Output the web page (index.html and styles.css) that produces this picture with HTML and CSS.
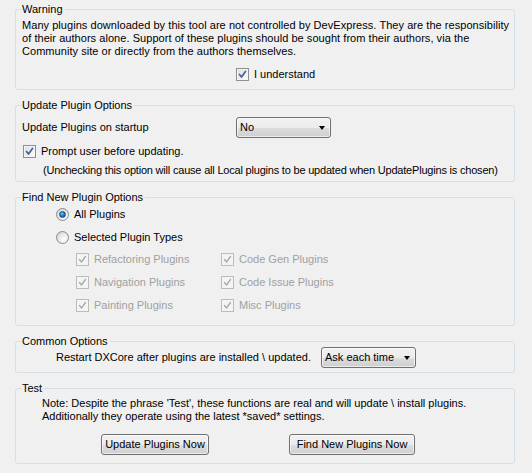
FILE: index.html
```html
<!DOCTYPE html>
<html>
<head>
<meta charset="utf-8">
<link rel="stylesheet" href="styles.css">
</head>
<body>
<div class="page">
  <fieldset class="group g-warning">
    <legend>Warning</legend>
    <p class="para warn-text">Many plugins downloaded by this tool are not controlled by DevExpress. They are the responsibility<br>of their authors alone. Support of these plugins should be sought from their authors, via the<br>Community site or directly from the authors themselves.</p>
    <div class="row understand">
      <span class="cb"><svg viewBox="0 0 11 11" width="11" height="11"><path d="M2.5 5.5 L4.5 8 L8.5 2.5" /></svg></span>
      <span class="lbl">I understand</span>
    </div>
  </fieldset>

  <fieldset class="group g-update">
    <legend>Update Plugin Options</legend>
    <div class="row startup">
      <span class="startup-label">Update Plugins on startup</span>
      <div class="combo combo-no"><span class="combo-text">No</span><span class="arrow"></span></div>
    </div>
    <div class="row prompt">
      <span class="cb"><svg viewBox="0 0 11 11" width="11" height="11"><path d="M2.5 5.5 L4.5 8 L8.5 2.5" /></svg></span>
      <span class="lbl">Prompt user before updating.</span>
    </div>
    <p class="para uncheck-note">(Unchecking this option will cause all Local plugins to be updated when UpdatePlugins is chosen)</p>
  </fieldset>

  <fieldset class="group g-find">
    <legend>Find New Plugin Options</legend>
    <div class="row radio-row first">
      <span class="radio on"></span>
      <span class="lbl">All Plugins</span>
    </div>
    <div class="row radio-row">
      <span class="radio"></span>
      <span class="lbl">Selected Plugin Types</span>
    </div>
    <div class="types">
      <div class="row dis"><span class="cb"><svg viewBox="0 0 11 11" width="11" height="11"><path d="M2.5 5.5 L4.5 8 L8.5 2.5" /></svg></span><span class="lbl">Refactoring Plugins</span></div>
      <div class="row dis"><span class="cb"><svg viewBox="0 0 11 11" width="11" height="11"><path d="M2.5 5.5 L4.5 8 L8.5 2.5" /></svg></span><span class="lbl">Code Gen Plugins</span></div>
      <div class="row dis"><span class="cb"><svg viewBox="0 0 11 11" width="11" height="11"><path d="M2.5 5.5 L4.5 8 L8.5 2.5" /></svg></span><span class="lbl">Navigation Plugins</span></div>
      <div class="row dis"><span class="cb"><svg viewBox="0 0 11 11" width="11" height="11"><path d="M2.5 5.5 L4.5 8 L8.5 2.5" /></svg></span><span class="lbl">Code Issue Plugins</span></div>
      <div class="row dis"><span class="cb"><svg viewBox="0 0 11 11" width="11" height="11"><path d="M2.5 5.5 L4.5 8 L8.5 2.5" /></svg></span><span class="lbl">Painting Plugins</span></div>
      <div class="row dis"><span class="cb"><svg viewBox="0 0 11 11" width="11" height="11"><path d="M2.5 5.5 L4.5 8 L8.5 2.5" /></svg></span><span class="lbl">Misc Plugins</span></div>
    </div>
  </fieldset>

  <fieldset class="group g-common">
    <legend>Common Options</legend>
    <div class="row restart">
      <span class="restart-label">Restart DXCore after plugins are installed \ updated.</span>
      <div class="combo combo-ask"><span class="combo-text">Ask each time</span><span class="arrow"></span></div>
    </div>
  </fieldset>

  <fieldset class="group g-test">
    <legend>Test</legend>
    <p class="para test-note">Note: Despite the phrase 'Test', these functions are real and will update \ install plugins.<br>Additionally they operate using the latest *saved* settings.</p>
    <div class="buttons">
      <button class="btn btn-update" type="button">Update Plugins Now</button>
      <button class="btn btn-find" type="button">Find New Plugins Now</button>
    </div>
  </fieldset>
</div>
</body>
</html>
```

FILE: styles.css
```css
html, body {
  margin: 0;
  padding: 0;
  background: #f0f0f0;
}
body {
  font-family: "Liberation Sans", Arial, sans-serif;
  font-size: 11px;
  line-height: 13px;
  color: #000;
}
.page {
  width: 500px;
  padding: 3px 0 0 15px;
}
.group {
  margin: 9px 0 0 0;
  padding: 0 6px;
  border: 1px solid #d5dfe5;
  border-radius: 3px;
  min-width: 0;
}
.group:first-child { margin-top: 0; }
legend {
  padding: 0 2px 0 0;
  margin-left: 0;
  line-height: 13px;
  height: 13px;
}
.para {
  margin: 0;
  white-space: nowrap;
}
.row {
  display: flex;
  align-items: center;
  height: 13px;
  white-space: nowrap;
}
.lbl { margin-left: 5px; }

/* checkbox */
.cb {
  box-sizing: border-box;
  width: 13px;
  height: 13px;
  flex: none;
  border: 1px solid #8e8f8f;
  background: linear-gradient(135deg, #dcdcdc 0%, #f4f4f4 70%, #ffffff 100%);
  box-shadow: inset 0 0 0 1px #f4f4f4;
  display: flex;
  align-items: center;
  justify-content: center;
}
.cb svg { display: block; }
.cb path {
  fill: none;
  stroke: #4a5f97;
  stroke-width: 1.7;
  stroke-linecap: round;
  stroke-linejoin: round;
}
.dis .cb {
  border-color: #bcbcbc;
  background: #f4f4f4;
  box-shadow: none;
}
.dis .cb path { stroke: #a9a9a9; stroke-width: 1.3; }
.dis .lbl { color: #a0a0a0; }

/* radio */
.radio {
  box-sizing: border-box;
  width: 13px;
  height: 13px;
  flex: none;
  border-radius: 50%;
  border: 1px solid #8a8a8a;
  background: radial-gradient(circle at 65% 70%, #ffffff 0%, #e6e6e6 55%, #c8c8c8 100%);
  display: flex;
  align-items: center;
  justify-content: center;
}
.radio.on::after {
  content: "";
  width: 7px;
  height: 7px;
  border-radius: 50%;
  background: radial-gradient(circle at 40% 35%, #7fd0f5 0%, #1f7fc8 45%, #0c3d75 100%);
  border: 0.5px solid #1c4f86;
  box-sizing: border-box;
}

/* warning group */
.warn-text { margin-top: 3px; letter-spacing: 0.05px; }
.understand { margin-top: 10px; padding-left: 214px; margin-bottom: 8px; }

/* update group */
.startup { height: 21px; margin-top: 5px; }
.startup-label { width: 214px; }
.prompt { margin-top: 7px; padding-left: 1px; }
.uncheck-note { margin-top: 6px; padding-left: 21px; margin-bottom: 4px; letter-spacing: -0.2px; }

/* combo */
.combo {
  box-sizing: border-box;
  height: 21px;
  border: 1px solid #707070;
  border-radius: 3px;
  background: linear-gradient(#f2f2f2 0%, #ebebeb 50%, #dddddd 51%, #cfcfcf 100%);
  box-shadow: inset 0 0 0 1px rgba(255,255,255,0.6);
  display: flex;
  align-items: center;
  justify-content: space-between;
  padding: 0 5px 0 3px;
}
.combo-no { width: 95px; }
.combo-ask { width: 95px; }
.arrow {
  width: 0;
  height: 0;
  border-left: 3.5px solid transparent;
  border-right: 3.5px solid transparent;
  border-top: 4px solid #000;
  margin-top: 1px;
}

/* find group */
.radio-row { padding-left: 34px; }
.radio-row.first { margin-top: 4px; }
.radio-row + .radio-row { margin-top: 10px; }
.types {
  display: grid;
  grid-template-columns: 145px auto;
  row-gap: 10px;
  padding-left: 54px;
  margin-top: 9px;
  margin-bottom: 13px;
}

/* common group */
.restart { height: 21px; margin-top: -1px; margin-bottom: 4px; }
.restart-label { width: 265px; padding-left: 34px; }

/* test group */
.test-note { margin-top: 2px; padding-left: 20px; }
.buttons {
  display: flex;
  gap: 80px;
  padding-left: 79px;
  margin-top: 11px;
  margin-bottom: 8px;
}
.btn {
  box-sizing: border-box;
  height: 21px;
  padding: 0;
  font: inherit;
  color: #000;
  border: 1px solid #707070;
  border-radius: 3px;
  background: linear-gradient(#f2f2f2 0%, #ebebeb 50%, #dddddd 51%, #cfcfcf 100%);
  box-shadow: inset 0 0 0 1px rgba(255,255,255,0.6);
}
.btn-update { width: 108px; }
.btn-find { width: 126px; }
```
